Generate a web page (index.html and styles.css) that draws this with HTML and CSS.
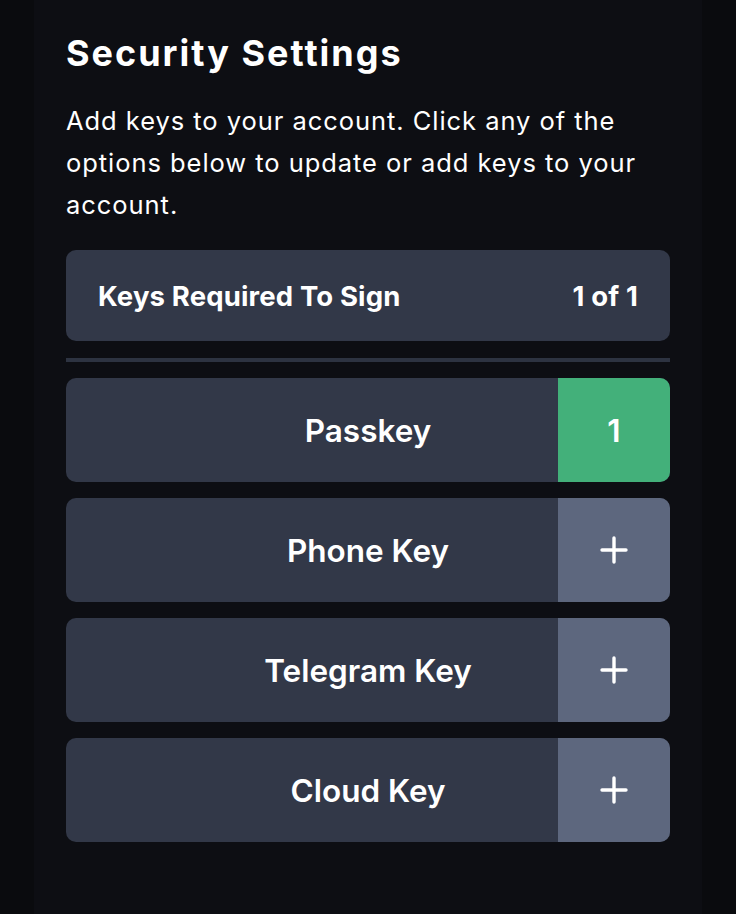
FILE: index.html
```html
<!DOCTYPE html>
<html lang="en">
<head>
<meta charset="utf-8">
<title>Security Settings</title>
<link rel="stylesheet" href="styles.css">
</head>
<body>
<main class="panel">
  <h1 class="title">Security Settings</h1>
  <p class="desc">Add keys to your account. Click any of the options below to update or add keys to your account.</p>
  <div class="required">
    <span>Keys Required To Sign</span>
    <span>1 of 1</span>
  </div>
  <hr class="divider">
  <ul class="keys">
    <li class="key">
      <span class="key-label">Passkey</span>
      <span class="key-action done">1</span>
    </li>
    <li class="key">
      <span class="key-label">Phone Key</span>
      <span class="key-action add"><svg width="28" height="28" viewBox="0 0 28 28"><path d="M14 2v24M2 14h24" stroke="#fff" stroke-width="3.4" stroke-linecap="round"/></svg></span>
    </li>
    <li class="key">
      <span class="key-label">Telegram Key</span>
      <span class="key-action add"><svg width="28" height="28" viewBox="0 0 28 28"><path d="M14 2v24M2 14h24" stroke="#fff" stroke-width="3.4" stroke-linecap="round"/></svg></span>
    </li>
    <li class="key">
      <span class="key-label">Cloud Key</span>
      <span class="key-action add"><svg width="28" height="28" viewBox="0 0 28 28"><path d="M14 2v24M2 14h24" stroke="#fff" stroke-width="3.4" stroke-linecap="round"/></svg></span>
    </li>
  </ul>
</main>
</body>
</html>
```
FILE: styles.css
```css
html, body {
  margin: 0;
  padding: 0;
  background: #0a0b0e;
  font-family: Inter, "Liberation Sans", sans-serif;
  color: #fff;
}
.panel {
  margin: 0 34px;
  min-height: 914px;
  box-sizing: border-box;
  background: #0d0e13;
  padding: 32px 32px 40px;
}
.title {
  margin: 0;
  font-size: 36px;
  font-weight: 750;
  line-height: 42px;
  letter-spacing: 2px;
}
.desc {
  margin: 26px 0 0;
  font-size: 25.5px;
  line-height: 42px;
  font-weight: 400;
  letter-spacing: 0.95px;
}
.required {
  margin-top: 24px;
  height: 91px;
  box-sizing: border-box;
  background: #323848;
  border-radius: 10px;
  display: flex;
  align-items: center;
  justify-content: space-between;
  padding: 0 32px;
  font-size: 27.5px;
  font-weight: 700;
  letter-spacing: 0.15px;
}
.divider {
  margin: 17px 0 0;
  border: 0;
  height: 4px;
  background: #2d3341;
}
.keys {
  list-style: none;
  margin: 16px 0 0;
  padding: 0;
  display: flex;
  flex-direction: column;
  gap: 16px;
}
.key {
  display: flex;
  height: 104px;
  background: #323848;
  border-radius: 10px;
  overflow: hidden;
}
.key-label {
  flex: 1;
  display: flex;
  align-items: center;
  justify-content: center;
  padding-left: 112px;
  font-size: 31.5px;
  font-weight: 600;
}
.key-action {
  width: 112px;
  display: flex;
  align-items: center;
  justify-content: center;
  font-size: 31.5px;
  font-weight: 600;
}
.done { background: #43b07a; }
.add { background: #5d677e; }
```
